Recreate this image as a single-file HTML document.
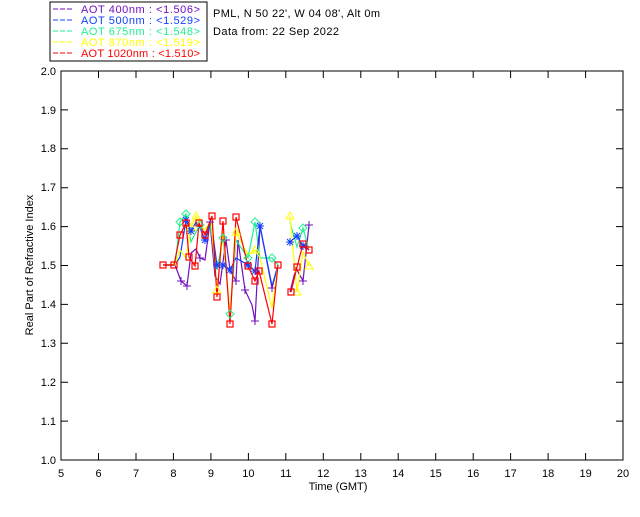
<!DOCTYPE html>
<html><head><style>
html,body{margin:0;padding:0;background:#fff;}
body{width:640px;height:512px;overflow:hidden;}
svg text{font-family:"Liberation Sans",sans-serif;font-size:11px;}
</style></head><body>
<svg width="640" height="512" xmlns="http://www.w3.org/2000/svg">
<defs>
<path id="pl" d="M-4 0h8M0 -4v8" fill="none"/>
<path id="as" d="M-4 0h8M0 -4v8M-3 -3l6 6M-3 3l6 -6" fill="none"/>
<path id="di" d="M0 -4l4 4l-4 4l-4 -4z" fill="none"/>
<path id="tr" d="M0 -4l4 7h-8z" fill="none"/>
</defs>
<rect x="50" y="2" width="157" height="59" fill="none" stroke="#000" stroke-width="1"/>
<g font-size="11" xml:space="preserve">
<line x1="53" y1="9" x2="73" y2="9" stroke="#7010c0" stroke-dasharray="5,2"/><text x="81" y="13" fill="#7010c0" textLength="119">AOT  400nm : &lt;1.506&gt;</text>
<line x1="53" y1="20" x2="73" y2="20" stroke="#1040ff" stroke-dasharray="5,2"/><text x="81" y="24" fill="#1040ff" textLength="119">AOT  500nm : &lt;1.529&gt;</text>
<line x1="53" y1="31" x2="73" y2="31" stroke="#20f090" stroke-dasharray="5,2"/><text x="81" y="35" fill="#20f090" textLength="119">AOT  675nm : &lt;1.548&gt;</text>
<line x1="53" y1="42" x2="73" y2="42" stroke="#ffff00" stroke-dasharray="5,2"/><text x="81" y="46" fill="#ffff00" textLength="119">AOT  870nm : &lt;1.519&gt;</text>
<line x1="53" y1="53" x2="73" y2="53" stroke="#ff0000" stroke-dasharray="5,2"/><text x="81" y="57" fill="#ff0000" textLength="119">AOT 1020nm : &lt;1.510&gt;</text>
</g>
<text x="213" y="17" fill="#000" font-size="11" textLength="167">PML, N 50 22', W 04 08', Alt 0m</text>
<text x="213" y="35" fill="#000" font-size="11" textLength="126">Data from: 22 Sep 2022</text>
<rect x="61" y="71" width="562" height="389" fill="none" stroke="#000"/>
<g stroke="#000">
<path d="M98.5 460v-7M136 460v-7M173.4 460v-7M210.9 460v-7M248.4 460v-7M285.8 460v-7M323.3 460v-7M360.8 460v-7M398.2 460v-7M435.7 460v-7M473.2 460v-7M510.6 460v-7M548.1 460v-7M585.6 460v-7"/>
<path d="M98.5 71v7M136 71v7M173.4 71v7M210.9 71v7M248.4 71v7M285.8 71v7M323.3 71v7M360.8 71v7M398.2 71v7M435.7 71v7M473.2 71v7M510.6 71v7M548.1 71v7M585.6 71v7"/>
<path d="M61 421.1h7M61 382.2h7M61 343.3h7M61 304.4h7M61 265.5h7M61 226.6h7M61 187.7h7M61 148.8h7M61 109.9h7M616 421.1h7M616 382.2h7M616 343.3h7M616 304.4h7M616 265.5h7M616 226.6h7M616 187.7h7M616 148.8h7M616 109.9h7"/>
</g>
<g font-size="10" fill="#000" text-anchor="end">
<text x="56" y="464">1.0</text><text x="56" y="425">1.1</text><text x="56" y="386">1.2</text><text x="56" y="347">1.3</text><text x="56" y="308">1.4</text><text x="56" y="269">1.5</text><text x="56" y="230">1.6</text><text x="56" y="191">1.7</text><text x="56" y="152">1.8</text><text x="56" y="114">1.9</text><text x="56" y="75">2.0</text>
</g>
<g font-size="10" fill="#000" text-anchor="middle">
<text x="61" y="477">5</text><text x="98.5" y="477">6</text><text x="136" y="477">7</text><text x="173.4" y="477">8</text><text x="210.9" y="477">9</text><text x="248.4" y="477">10</text><text x="285.8" y="477">11</text><text x="323.3" y="477">12</text><text x="360.8" y="477">13</text><text x="398.2" y="477">14</text><text x="435.7" y="477">15</text><text x="473.2" y="477">16</text><text x="510.6" y="477">17</text><text x="548.1" y="477">18</text><text x="585.6" y="477">19</text><text x="623" y="477">20</text>
<text x="338" y="490">Time (GMT)</text>
</g>
<text x="33" y="265" font-size="10" fill="#000" text-anchor="middle" transform="rotate(-90 33 265)">Real Part of Refractive Index</text>
<g fill="none" stroke-width="1.2">
<polyline stroke="#7010c0" points="163,265 175,265 181,281 187,286 191,253 196,249 200,258 205,260 210,222 215,276 220,284 226,240 230,270 236,281 238,240 245,290 252,305 255,321 260,226 272,288 278,265"/>
<polyline stroke="#7010c0" points="290,292 296,268 303,281 309,225"/>
<polyline stroke="#20f090" points="163,265 175,265 180,222 186,214 191,242 196,232 200,225 205,235 210,222 217,270 223,238 230,314 236,240 248,258 255,222 260,258 272,258 278,265"/>
<polyline stroke="#20f090" points="290,222 297,247 303,228 309,250"/>
<polyline stroke="#1040ff" points="163,265 175,265 180,257 186,220 191,231 196,222 200,228 205,240 211,221 217,265 223,265 230,270 236,258 248,265 255,271 260,226 272,286 278,265"/>
<polyline stroke="#1040ff" points="290,242 297,236 303,246 309,250"/>
<polyline stroke="#ffff00" points="163,265 175,265 180,250 186,258 191,227 196,216 200,225 205,230 211,220 217,290 223,232 230,314 236,232 248,255 255,250 260,258 272,308 278,265"/>
<polyline stroke="#ffff00" points="290,216 297,292 303,252 309,266"/>
<polyline stroke="#ff0000" points="163,265 174,265 180,235 186,223 189,257 195,266 199,223 205,235 212,216 217,297 223,221 230,324 236,217 248,266 255,281 259,271 272,324 278,265"/>
<polyline stroke="#ff0000" points="291,292 297,267 303,244 309,250"/>
</g>
<g stroke="#7010c0"><use href="#pl" x="181" y="281"/><use href="#pl" x="187" y="286"/><use href="#pl" x="200" y="258"/><use href="#pl" x="210" y="222"/><use href="#pl" x="226" y="240"/><use href="#pl" x="236" y="281"/><use href="#pl" x="245" y="290"/><use href="#pl" x="255" y="321"/><use href="#pl" x="272" y="288"/><use href="#pl" x="303" y="281"/><use href="#pl" x="309" y="225"/></g>
<g stroke="#20f090"><use href="#di" x="180" y="222"/><use href="#di" x="186" y="214"/><use href="#di" x="200" y="225"/><use href="#di" x="223" y="238"/><use href="#di" x="230" y="314"/><use href="#di" x="248" y="258"/><use href="#di" x="255" y="222"/><use href="#di" x="272" y="258"/><use href="#di" x="303" y="228"/></g>
<g stroke="#ffff00"><use href="#tr" x="191" y="227"/><use href="#tr" x="196" y="216"/><use href="#tr" x="217" y="290"/><use href="#tr" x="236" y="232"/><use href="#tr" x="255" y="250"/><use href="#tr" x="290" y="216"/><use href="#tr" x="297" y="292"/><use href="#tr" x="309" y="266"/></g>
<g stroke="#1040ff"><use href="#as" x="186" y="220"/><use href="#as" x="191" y="231"/><use href="#as" x="205" y="240"/><use href="#as" x="217" y="265"/><use href="#as" x="223" y="265"/><use href="#as" x="230" y="270"/><use href="#as" x="248" y="265"/><use href="#as" x="255" y="271"/><use href="#as" x="260" y="226"/><use href="#as" x="290" y="242"/><use href="#as" x="297" y="236"/><use href="#as" x="303" y="246"/></g>
<g fill="none" stroke="#ff0000" stroke-width="1.2">
<rect x="160" y="262" width="6" height="6"/><rect x="171" y="262" width="6" height="6"/><rect x="177" y="232" width="6" height="6"/><rect x="183" y="220" width="6" height="6"/><rect x="186" y="254" width="6" height="6"/><rect x="192" y="263" width="6" height="6"/><rect x="196" y="220" width="6" height="6"/><rect x="202" y="232" width="6" height="6"/><rect x="209" y="213" width="6" height="6"/><rect x="214" y="294" width="6" height="6"/><rect x="220" y="218" width="6" height="6"/><rect x="227" y="321" width="6" height="6"/><rect x="233" y="214" width="6" height="6"/><rect x="245" y="263" width="6" height="6"/><rect x="252" y="278" width="6" height="6"/><rect x="256" y="268" width="6" height="6"/><rect x="269" y="321" width="6" height="6"/><rect x="275" y="262" width="6" height="6"/><rect x="288" y="289" width="6" height="6"/><rect x="294" y="264" width="6" height="6"/><rect x="300" y="241" width="6" height="6"/><rect x="306" y="247" width="6" height="6"/>
</g>
</svg>
</body></html>
